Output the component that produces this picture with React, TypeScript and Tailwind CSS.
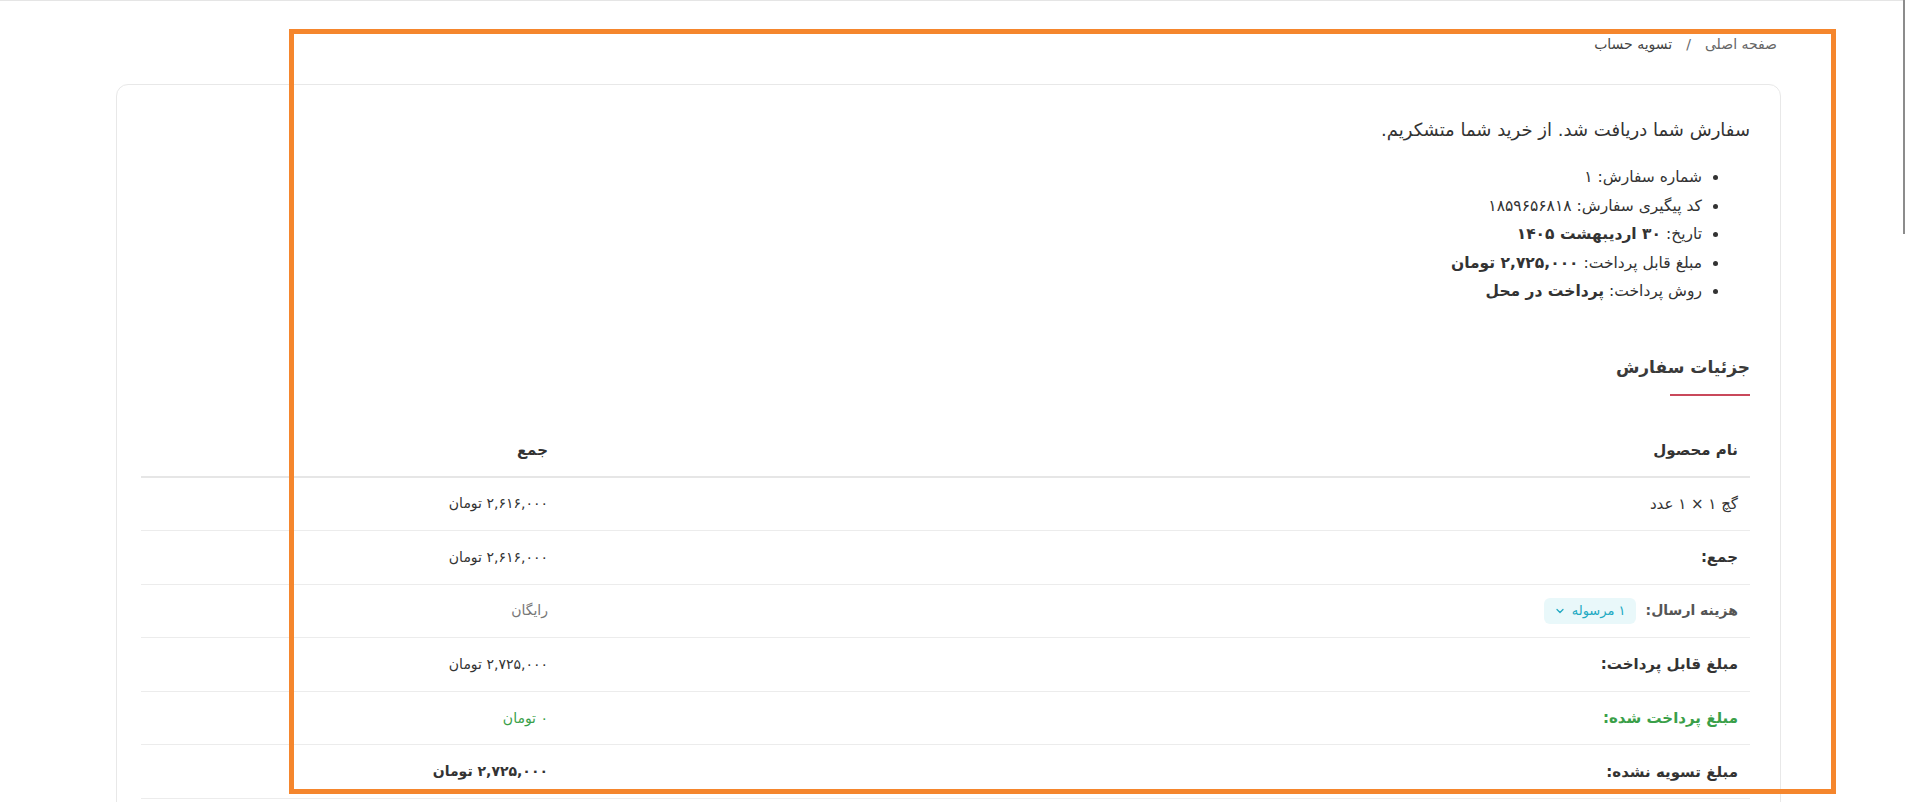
import { ChevronDown } from 'lucide-react';

type Row = {
  label: React.ReactNode;
  value: React.ReactNode;
};

const orderInfo = [
  { label: 'شماره سفارش:', value: '۱', bold: false },
  { label: 'کد پیگیری سفارش:', value: '۱۸۵۹۶۵۶۸۱۸', bold: false },
  { label: 'تاریخ:', value: '۳۰ اردیبهشت ۱۴۰۵', bold: true },
  { label: 'مبلغ قابل پرداخت:', value: '۲,۷۲۵,۰۰۰ تومان', bold: true },
  { label: 'روش پرداخت:', value: 'پرداخت در محل', bold: true },
];

const rows: Row[] = [
  {
    label: <span className="font-medium">گچ ۱ × ۱ عدد</span>,
    value: <span>۲,۶۱۶,۰۰۰ تومان</span>,
  },
  {
    label: <span className="font-bold">جمع:</span>,
    value: <span>۲,۶۱۶,۰۰۰ تومان</span>,
  },
  {
    label: (
      <div className="flex items-center gap-[10px]">
        <span className="text-[14px] font-bold text-[#555]">هزینه ارسال:</span>
        <span className="flex h-[26px] w-[92px] items-center justify-center gap-[6px] rounded-md bg-[#e9f8fa] text-[13px] text-[#20a9c2]">
          ۱ مرسوله
          <ChevronDown size={12} strokeWidth={2.5} />
        </span>
      </div>
    ),
    value: <span className="text-[14px] text-[#777]">رایگان</span>,
  },
  {
    label: <span className="font-bold">مبلغ قابل پرداخت:</span>,
    value: <span>۲,۷۲۵,۰۰۰ تومان</span>,
  },
  {
    label: <span className="font-bold text-[#3a9f49]">مبلغ پرداخت شده:</span>,
    value: <span className="font-medium text-[#3a9f49]">۰ تومان</span>,
  },
  {
    label: <span className="font-bold">مبلغ تسویه نشده:</span>,
    value: <span className="font-bold">۲,۷۲۵,۰۰۰ تومان</span>,
  },
];

function OrderTable() {
  return (
    <div className="mt-[30px] w-full">
      <div className="grid h-[52px] grid-cols-[1fr_419px] items-center border-b-2 border-[#e6e6e6] text-[15px] font-bold text-[#333]">
        <div className="px-3">نام محصول</div>
        <div className="px-3">جمع</div>
      </div>
      {rows.map((row, i) => (
        <div
          key={i}
          className="grid h-[53.6px] grid-cols-[1fr_419px] items-center border-b border-[#ececec] text-[15px] text-[#333]"
        >
          <div className="px-3">{row.label}</div>
          <div className="px-3 text-[14px]">{row.value}</div>
        </div>
      ))}
    </div>
  );
}

export default function App() {
  return (
    <div className="relative h-[802px] w-full overflow-hidden bg-white font-['DejaVu_Sans',sans-serif] text-[#333]">
      <div className="h-px w-full bg-[#e5e5e5]" />
      <div dir="rtl" className="pl-[116px] pr-[124px]">
        <nav className="flex items-center gap-[14px] pr-[4px] pt-[34px] text-[14px] leading-[18px] text-[#666]">
          <span>صفحه اصلی</span>
          <span>/</span>
          <span className="text-[#444]">تسویه حساب</span>
        </nav>
        <div className="mt-[31px] rounded-xl border border-[#e8e8e8] pb-10 pl-6 pr-[30px] pt-[30px]">
          <p className="h-[30px] text-[18px] leading-[30px]">سفارش شما دریافت شد. از خرید شما متشکریم.</p>
          <ul className="mt-[18px] list-disc pr-[48px] text-[15.5px] leading-[28.5px] marker:text-[#333]">
            {orderInfo.map((item) => (
              <li key={item.label}>
                {item.label}{' '}
                <span className={item.bold ? 'font-bold' : ''}>{item.value}</span>
              </li>
            ))}
          </ul>
          <h2 className="mt-[46px] h-[30px] text-[17px] font-bold leading-[30px] text-[#3a3a3a]">جزئیات سفارش</h2>
          <div className="mt-[12px] h-[2px] w-[80px] bg-[#c9485b]" />
          <OrderTable />
        </div>
      </div>

      {/* highlight frame */}
      <div className="pointer-events-none absolute left-[289px] top-[29px] h-[765px] w-[1547px] border-[5px] border-[#f5862d]" />

      {/* thin scroll thumb */}
      <div className="absolute right-0 top-0 h-[234px] w-[2px] bg-[#8c8c8c]" />
    </div>
  );
}
